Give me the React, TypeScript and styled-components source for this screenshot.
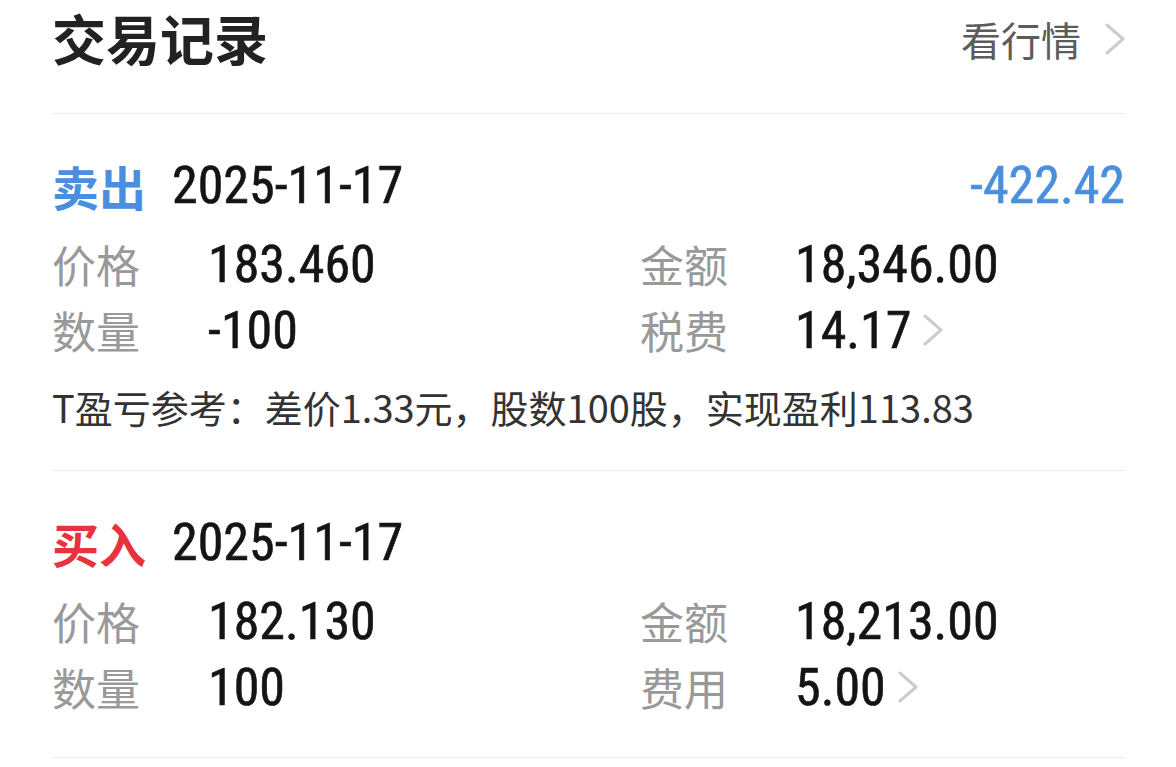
import React from "react"
import styled, { createGlobalStyle } from "styled-components"

const GlobalStyle = createGlobalStyle`
  body {
    margin: 0;
    background: #ffffff;
    font-family: "Noto Sans CJK SC", "Noto Sans", sans-serif;
  }
`

const Page = styled.div`
  padding: 0 51px 0 52px;
  width: 1176px;
  box-sizing: border-box;
`

const Header = styled.div`
  display: flex;
  align-items: center;
  justify-content: space-between;
  height: 84px;
  padding-bottom: 29px;
  border-bottom: 1px solid #ececec;
`

const Title = styled.h1`
  margin: -8px 0 0;
  font-size: 54px;
  font-weight: 700;
  color: #222;
  line-height: 1;
`

const MarketLink = styled.div`
  display: flex;
  align-items: center;
  gap: 24px;
  margin-top: -6px;
  font-size: 40px;
  color: #5c5c5c;
`

const Section = styled.div`
  padding: 38px 0 37px;
  border-bottom: 1px solid #ececec;
`

const DateRow = styled.div`
  display: flex;
  align-items: center;
  height: 66px;
  margin-bottom: 13px;
`

const Side = styled.span<{ $color: string }>`
  font-size: 47px;
  font-weight: 700;
  color: ${(p) => p.$color};
  margin-right: 26px;
`

const Num = styled.span`
  font-family: Roboto, "Open Sans", sans-serif;
  font-stretch: 82%;
  font-weight: 400;
  font-size: 52px;
  color: #141414;
  -webkit-text-stroke: 0.6px currentColor;
`

const Profit = styled(Num)<{ $color: string }>`
  margin-left: auto;
  color: ${(p) => p.$color};
`

const Grid = styled.div`
  display: grid;
  grid-template-columns: 588px 1fr;
  grid-auto-rows: 66px;
`

const Cell = styled.div`
  display: flex;
  align-items: center;
`

const Label = styled.span<{ $w: number }>`
  width: ${(p) => p.$w}px;
  font-size: 44px;
  color: #999;
`

const Note = styled.div`
  height: 50px;
  margin: 18px 0 2px;
  display: flex;
  align-items: center;
  font-size: 38px;
  color: #333;
`

const Chevron = ({ ml = 0 }: { ml?: number }) => (
  <svg width={20} height={32} viewBox="0 0 20 32" style={{ marginLeft: ml }} fill="none">
    <path d="M2 2 L18 16 L2 30" stroke="#cccccc" strokeWidth="3" strokeLinecap="round" strokeLinejoin="round" />
  </svg>
)

type Item = { label: string; value: string; more?: boolean }

const Trade = ({
  side,
  color,
  date,
  profit,
  items,
  note,
}: {
  side: string
  color: string
  date: string
  profit?: string
  items: Item[]
  note?: string
}) => (
  <Section>
    <DateRow>
      <Side $color={color}>{side}</Side>
      <Num>{date}</Num>
      {profit && <Profit $color={color}>{profit}</Profit>}
    </DateRow>
    <Grid>
      {items.map((it, i) => (
        <Cell key={i}>
          <Label $w={i % 2 === 0 ? 156 : 155}>{it.label}</Label>
          <Num>{it.value}</Num>
          {it.more && <Chevron ml={12} />}
        </Cell>
      ))}
    </Grid>
    {note && <Note>{note}</Note>}
  </Section>
)

const App = () => {
  return (
    <Page>
      <GlobalStyle />
      <Header>
        <Title>交易记录</Title>
        <MarketLink>
          看行情
          <Chevron />
        </MarketLink>
      </Header>
      <Trade
        side="卖出"
        color="#4a8fdf"
        date="2025-11-17"
        profit="-422.42"
        items={[
          { label: "价格", value: "183.460" },
          { label: "金额", value: "18,346.00" },
          { label: "数量", value: "-100" },
          { label: "税费", value: "14.17", more: true },
        ]}
        note="T盈亏参考：差价1.33元，股数100股，实现盈利113.83"
      />
      <Trade
        side="买入"
        color="#e8333f"
        date="2025-11-17"
        items={[
          { label: "价格", value: "182.130" },
          { label: "金额", value: "18,213.00" },
          { label: "数量", value: "100" },
          { label: "费用", value: "5.00", more: true },
        ]}
      />
    </Page>
  )
}

export default App
